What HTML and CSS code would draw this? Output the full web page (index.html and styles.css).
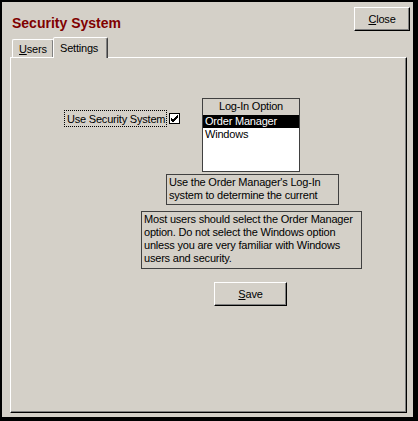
FILE: index.html
```html
<!DOCTYPE html>
<html lang="en">
<head>
  <meta charset="UTF-8">
  <title>Security System</title>
  <link rel="stylesheet" href="styles.css">
</head>
<body>
  <div class="window">
    <div class="header">
      <h1 class="title">Security System</h1>
      <button class="btn close-btn"><u>C</u>lose</button>
    </div>

    <div class="tabs">
      <div class="tab"><u>U</u>sers</div>
      <div class="tab active">Settings</div>
    </div>

    <div class="panel">
      <div class="option-row">
        <label class="use-label">
          <span class="focus-box">Use Security System</span>
          <span class="checkbox">
            <svg width="9" height="9" viewBox="0 0 9 9"><path d="M1 4 L3 6 L8 1 M1 5 L3 7 L8 2 M1 6 L3 8 L8 3" stroke="#000" stroke-width="1" fill="none"/></svg>
          </span>
        </label>
        <div class="listbox">
          <div class="list-head">Log-In Option</div>
          <div class="list-item selected">Order Manager</div>
          <div class="list-item">Windows</div>
        </div>
      </div>

      <div class="note note-desc">Use the Order Manager's Log-In<br>system to determine the current</div>
      <div class="note note-help">Most users should select the Order Manager option. Do not select the Windows option unless you are very familiar with Windows users and security.</div>

      <button class="btn save-btn"><u>S</u>ave</button>
    </div>
  </div>
</body>
</html>
```

FILE: styles.css
```css
* { box-sizing: border-box; }
body {
  margin: 0;
  font-family: "Liberation Sans", Arial, sans-serif;
  font-size: 11px;
  color: #000;
  background: #fff;
}

.window {
  width: 418px;
  height: 421px;
  background: #d4d0c8;
  border-style: solid;
  border-color: #000;
  border-width: 2px 5px 4px 2px;
  display: flex;
  flex-direction: column;
}

.header {
  display: flex;
  justify-content: space-between;
  align-items: flex-start;
  padding: 5px 3px 0 10px;
  height: 35px;
}

.title {
  margin: 8px 0 0;
  font-size: 14px;
  font-weight: bold;
  color: #800000;
  line-height: 16px;
}

.btn {
  font-family: "Liberation Sans", Arial, sans-serif;
  font-size: 11px;
  color: #000;
  background: #d4d0c8;
  border: 1px solid;
  border-color: #fff #000 #000 #fff;
  box-shadow: inset -1px -1px 0 #808080;
  padding: 0;
  letter-spacing: -0.2px;
}

.close-btn {
  width: 56px;
  height: 24px;
}

/* tabs */
.tabs {
  display: flex;
  align-items: flex-end;
  height: 20px;
  padding-left: 10px;
}

.tab {
  height: 18px;
  width: 42px;
  padding: 3px 0 0 6px;
  border: 1px solid;
  border-bottom: none;
  border-color: #fff #404040 transparent #fff;
  border-radius: 2px 2px 0 0;
  box-shadow: inset -1px 0 0 #808080;
  letter-spacing: -0.2px;
}

.tab.active {
  width: 55px;
  height: 21px;
  padding: 4px 0 0 6px;
  margin-bottom: -1px;
  margin-left: -1px;
  background: #d4d0c8;
  position: relative;
  z-index: 1;
}

.panel {
  flex: 1;
  margin: 0 6px 4px 8px;
  border: 1px solid;
  border-color: #fff #000 #000 #fff;
  box-shadow: inset -1px -1px 0 #808080;
  padding-top: 40px;
  display: flex;
  flex-direction: column;
  align-items: flex-start;
  letter-spacing: -0.2px;
}

.option-row {
  display: flex;
  align-items: flex-start;
  margin-left: 53px;
}

.use-label {
  display: flex;
  align-items: center;
  margin-top: 12px;
}

.focus-box {
  border: 1px dotted #000;
  height: 17px;
  width: 103px;
  padding: 1px 0 0 2px;
  line-height: 14px;
}

.checkbox {
  width: 11px;
  height: 11px;
  margin-left: 2px;
  border: 1px solid #000;
  background: #fff;
  display: flex;
  align-items: center;
  justify-content: center;
}

.listbox {
  margin-left: 22px;
  width: 98px;
  height: 74px;
  border: 1px solid #404040;
  background: #fff;
}

.list-head {
  background: #d4d0c8;
  text-align: center;
  height: 16px;
  line-height: 15px;
}

.list-item {
  height: 13px;
  line-height: 13px;
  padding-left: 2px;
}

.list-item.selected {
  background: #000;
  color: #fff;
}

.note {
  border: 1px solid #404040;
  line-height: 13px;
  padding: 1px 2px 0;
}

.note-desc {
  margin: 2px 0 0 155px;
  width: 173px;
  height: 31px;
}

.note-help {
  margin: 6px 0 0 130px;
  width: 221px;
  height: 58px;
}

.save-btn {
  margin: 13px 0 0 203px;
  width: 73px;
  height: 24px;
}
```
